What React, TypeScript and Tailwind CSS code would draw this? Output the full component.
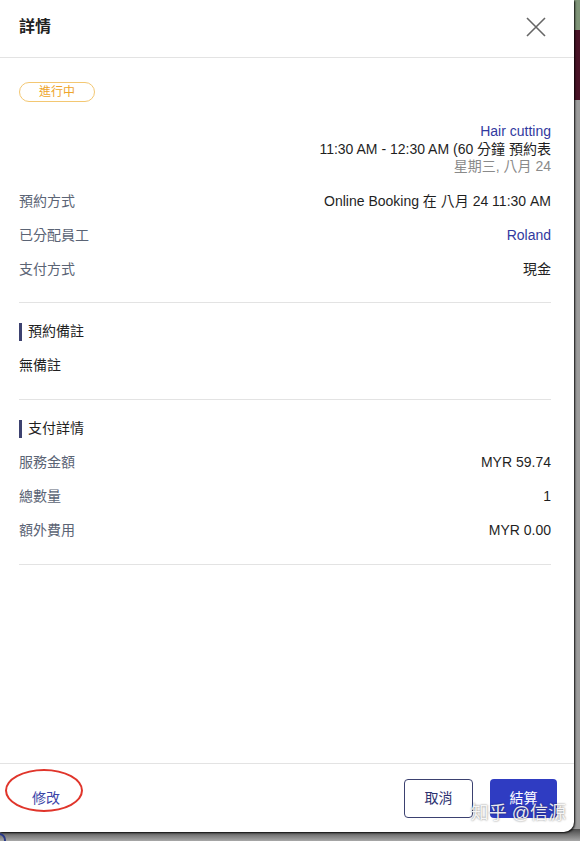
import React from "react";

const font = { fontFamily: '"Liberation Sans", "Noto Sans CJK TC", Arial, sans-serif' };

function Row({ label, value, valueClass = "text-[#1f1f1f]" }: { label: string; value: string; valueClass?: string }) {
  return (
    <div className="flex h-[34px] items-center justify-between text-[14px]">
      <span className="text-[#5b6475]">{label}</span>
      <span className={valueClass}>{value}</span>
    </div>
  );
}

function SectionTitle({ children }: { children: React.ReactNode }) {
  return (
    <div className="flex h-[34px] items-center">
      <span className="mr-[6px] h-[18px] w-[3px] bg-[#3d4270]" />
      <span className="text-[14px] text-[#1f1f1f]">{children}</span>
    </div>
  );
}

export default function App() {
  return (
    <div className="relative h-[841px] w-[580px] overflow-hidden bg-[#9c9c9c]" style={font}>
      {/* backdrop strips */}
      <div className="absolute right-0 top-0 h-[30px] w-[8px] bg-[#7f9478]" />
      <div className="absolute right-0 top-[30px] h-[70px] w-[8px] bg-[#4a1428]" />
      <div className="absolute bottom-0 left-0 h-[12px] w-full bg-gradient-to-b from-[#4a4a4a] to-[#a8a8a8]" />
      <div className="absolute bottom-[-6px] left-[-8px] h-[14px] w-[14px] rounded-full border-2 border-[#2a3a8a]" />

      {/* modal */}
      <div className="relative flex h-[832px] w-[574px] flex-col rounded-br-[10px] bg-white shadow-[1px_1px_2px_rgba(0,0,0,0.9)]">
        {/* header */}
        <div className="flex h-[58px] shrink-0 items-center justify-between border-b border-[#e3e3e3] pb-[4px] pl-[19px] pr-[28px]">
          <span className="text-[16px] font-bold text-[#222]">詳情</span>
          <svg width="20" height="20" viewBox="0 0 20 20" className="text-[#666]">
            <path d="M1 1 L19 19 M19 1 L1 19" stroke="currentColor" strokeWidth="1.6" fill="none" />
          </svg>
        </div>

        {/* body */}
        <div className="flex-1 pl-[19px] pr-[23px] pt-[24px]">
          <div className="flex h-[20px] w-[76px] items-center justify-center rounded-full border border-[#f3c772] text-[12px] text-[#eea42a]">
            進行中
          </div>

          <div className="mt-[21px] flex flex-col items-end text-[14px] leading-[17.5px]">
            <span className="text-[#3239a0]">Hair cutting</span>
            <span className="text-[#1f1f1f]">11:30 AM - 12:30 AM (60 分鐘 預約表</span>
            <span className="text-[#8a8a8a]">星期三, 八月 24</span>
          </div>

          <div className="mt-[9px]">
            <Row label="預約方式" value="Online Booking 在 八月 24 11:30 AM" />
            <Row label="已分配員工" value="Roland" valueClass="text-[#3239a0]" />
            <Row label="支付方式" value="現金" />
          </div>

          <div className="mt-[15px] h-px bg-[#e3e3e3]" />

          <div className="mt-[12px]">
            <SectionTitle>預約備註</SectionTitle>
            <div className="flex h-[34px] items-center text-[14px] text-[#1f1f1f]">無備註</div>
          </div>

          <div className="mt-[16px] h-px bg-[#e3e3e3]" />

          <div className="mt-[12px]">
            <SectionTitle>支付詳情</SectionTitle>
            <Row label="服務金額" value="MYR 59.74" />
            <Row label="總數量" value="1" />
            <Row label="額外費用" value="MYR 0.00" />
          </div>

          <div className="mt-[16px] h-px bg-[#e3e3e3]" />
        </div>

        {/* footer */}
        <div className="flex h-[69px] shrink-0 items-center justify-between border-t border-[#e3e3e3] pl-[32px] pr-[17px]">
          <div className="relative">
            <span className="text-[14px] text-[#3b45a8]">修改</span>
            <div className="pointer-events-none absolute left-[-27px] top-[-17px] h-[43px] w-[78px] rounded-[50%] border-2 border-[#e0352b]" />
          </div>
          <div className="flex items-center gap-[17px]">
            <button className="flex h-[39px] w-[69px] items-center justify-center rounded-[4px] border border-[#3b4170] text-[14px] text-[#2d3270]">
              取消
            </button>
            <button className="flex h-[39px] w-[67px] items-center justify-center rounded-[4px] bg-[#2f3cc2] text-[14px] text-white">
              結算
            </button>
          </div>
        </div>

        {/* watermark */}
        <div className="pointer-events-none absolute bottom-[5px] right-[8px] text-[18px] text-white/90 [text-shadow:0_0_2px_rgba(0,0,0,0.6)]">
          知乎 @信源
        </div>
      </div>
    </div>
  );
}
